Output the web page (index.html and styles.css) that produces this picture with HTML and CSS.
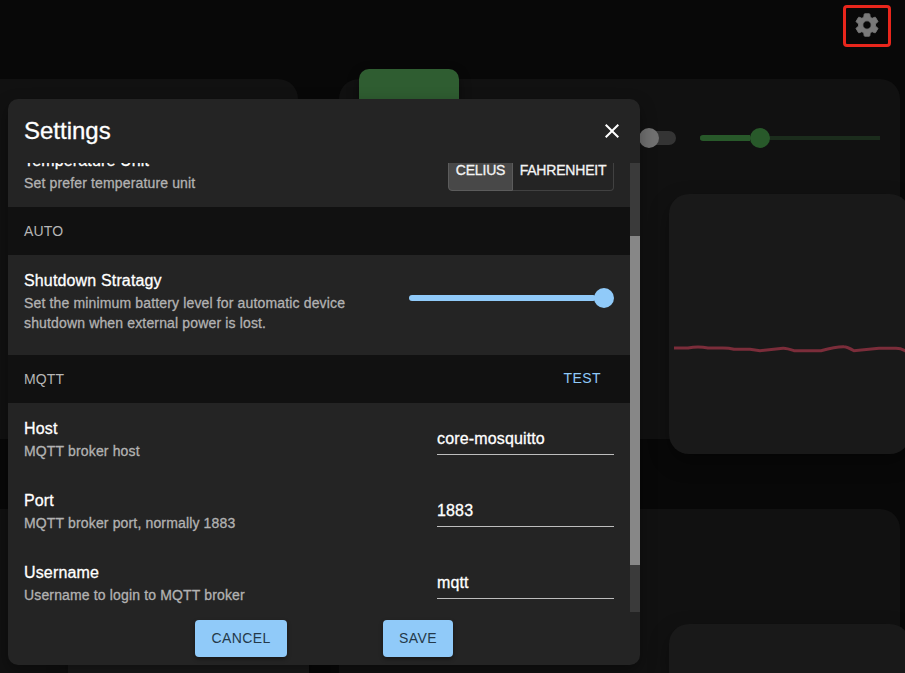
FILE: index.html
```html
<!DOCTYPE html>
<html lang="en">
<head>
<meta charset="utf-8">
<title>Settings</title>
<link rel="stylesheet" href="styles.css">
</head>
<body>
<header class="topbar">
  <button class="gear" aria-label="Settings">
    <svg viewBox="0 0 24 24"><path d="M19.14 12.94c.04-.3.06-.61.06-.94 0-.32-.02-.64-.07-.94l2.03-1.58c.18-.14.23-.41.12-.61l-1.92-3.32c-.12-.22-.37-.29-.59-.22l-2.39.96c-.5-.38-1.03-.7-1.62-.94l-.36-2.54c-.04-.24-.24-.41-.48-.41h-3.84c-.24 0-.43.17-.47.41l-.36 2.54c-.59.24-1.13.57-1.62.94l-2.39-.96c-.22-.08-.47 0-.59.22L2.74 8.87c-.12.21-.08.47.12.61l2.03 1.58c-.05.3-.09.63-.09.94s.02.64.07.94l-2.03 1.58c-.18.14-.23.41-.12.61l1.92 3.32c.12.22.37.29.59.22l2.39-.96c.5.38 1.03.7 1.62.94l.36 2.54c.05.24.24.41.48.41h3.84c.24 0 .44-.17.47-.41l.36-2.54c.59-.24 1.13-.56 1.62-.94l2.39.96c.22.08.47 0 .59-.22l1.92-3.32c.12-.22.07-.47-.12-.61l-2.01-1.58zM12 15.6c-1.98 0-3.6-1.62-3.6-3.6s1.62-3.6 3.6-3.6 3.6 1.62 3.6 3.6-1.62 3.6-3.6 3.6z"/></svg>
  </button>
</header>
<main class="board">
  <section class="card left"><div class="chart"></div></section>
  <section class="card right">
    <div class="controls">
      <div class="tile"></div>
      <div class="switch"><span class="switch-knob"></span></div>
      <div class="fan"><span class="fan-track"></span><span class="fan-knob"></span></div>
    </div>
    <div class="chart">
      <svg class="line" viewBox="0 0 236 20"><path d="M0 10H14Q24 8.2 34 10H49Q55 10 60 11.3H76L86 12.7L109 10.3Q112 10 120 12.7H147Q162 8.5 170 8.7Q173 8.7 180 12.7L205 10.2H222Q227 10.2 231 12.7H236"/></svg>
    </div>
  </section>
  <section class="card left cut"><div class="chart cut"></div></section>
  <section class="card right cut"><div class="chart low cut"></div></section>
</main>

<div class="dialog" role="dialog">
  <div class="dialog-head">
    <h1>Settings</h1>
    <svg class="close" viewBox="0 0 24 24"><path d="M19 6.41 17.59 5 12 10.59 6.41 5 5 6.41 10.59 12 5 17.59 6.41 19 12 13.41 17.59 19 19 17.59 13.41 12z"/></svg>
  </div>
  <div class="viewport">
    <div class="list">
      <div class="row">
        <div class="label"><p class="name">Temperature Unit</p><p class="desc">Set prefer temperature unit</p></div>
        <div class="toggle"><button class="selected">CELIUS</button><button>FAHRENHEIT</button></div>
      </div>
      <div class="section"><span>AUTO</span></div>
      <div class="row tall">
        <div class="label"><p class="name">Shutdown Stratagy</p><p class="desc">Set the minimum battery level for automatic device shutdown when external power is lost.</p></div>
        <div class="slider"><span class="slider-track"></span><span class="slider-knob"></span></div>
      </div>
      <div class="section"><span>MQTT</span><button class="test">TEST</button></div>
      <div class="row">
        <div class="label"><p class="name">Host</p><p class="desc">MQTT broker host</p></div>
        <input type="text" aria-label="Host" value="core-mosquitto">
      </div>
      <div class="row">
        <div class="label"><p class="name">Port</p><p class="desc">MQTT broker port, normally 1883</p></div>
        <input type="text" aria-label="Port" value="1883">
      </div>
      <div class="row">
        <div class="label"><p class="name">Username</p><p class="desc">Username to login to MQTT broker</p></div>
        <input type="text" aria-label="Username" value="mqtt">
      </div>
    </div>
    <div class="scrollbar"><div class="thumb"></div></div>
  </div>
  <div class="actions"><button>CANCEL</button><button>SAVE</button></div>
</div>
</body>
</html>
```
FILE: styles.css
```css
* { box-sizing: border-box; }
html, body { margin: 0; height: 100%; overflow: hidden; }
body {
  background: #080808;
  color: #fff;
  font-family: "Liberation Sans", Arial, sans-serif;
}
button, input { font-family: inherit; margin: 0; }

.topbar {
  height: 79px;
  padding: 5px 14px 0 0;
  display: flex;
  justify-content: flex-end;
  align-items: flex-start;
}
.gear {
  width: 48px;
  height: 42px;
  padding: 0;
  display: flex;
  align-items: center;
  justify-content: center;
  background: none;
  border: 3px solid #e8261c;
  border-radius: 4px;
}
.gear svg { width: 28px; height: 28px; flex: none; margin-top: -2px; fill: #797979; stroke: #797979; stroke-width: .8; }

.board {
  display: grid;
  grid-template-columns: 298px 561px;
  grid-template-rows: 360px 164px;
  gap: 70px 41px;
}
.card { background: #111; border-radius: 20px; }
.card.left { border-radius: 0 20px 20px 0; padding: 115px 0 0 68px; }
.chart {
  width: 241px;
  height: 260px;
  border-radius: 20px;
  background: #191919;
  box-shadow: 0 8px 20px rgba(0, 0, 0, .35);
}
.right .chart { margin-left: 330px; }
.chart.low { margin-top: 115px; }
.card.right { display: flow-root; }
.chart.cut { height: 49px; }
.card.cut, .chart.cut { border-bottom-left-radius: 0; border-bottom-right-radius: 0; }
.line { display: block; width: 236px; height: 20px; margin-left: 5px; transform: translateY(144px); }
.line path { fill: none; stroke: #7b2d3a; stroke-width: 3; }

.controls { height: 115px; padding-left: 20px; display: flex; align-items: flex-start; }
.tile { width: 100px; height: 100px; margin-top: -10px; border-radius: 10px; background: #2f5d31; box-shadow: 0 4px 12px rgba(0, 0, 0, .4); }
.switch { width: 34px; height: 14px; margin: 52px 24px 0 183px; border-radius: 7px; background: #343434; }
.switch-knob { display: block; width: 20px; height: 20px; margin: -3px 0 0 -3px; border-radius: 50%; background: #717171; }
.fan { display: flex; align-items: center; width: 180px; height: 20px; margin-top: 49px; background: linear-gradient(#1b2c1c, #1b2c1c) center / 100% 4px no-repeat; }
.fan-track { width: 50px; height: 6px; border-radius: 3px 0 0 3px; background: #28592a; }
.fan-knob { width: 20px; height: 20px; border-radius: 50%; background: #28592a; }

.dialog {
  position: absolute;
  left: 8px;
  top: 99px;
  width: 632px;
  height: 566px;
  display: flex;
  flex-direction: column;
  background: #242424;
  border-radius: 10px;
  box-shadow: 0 6px 16px rgba(0, 0, 0, .35);
}
.dialog-head { height: 64px; padding: 0 16px; display: flex; align-items: center; justify-content: space-between; }
.dialog-head h1 { margin: 0; font-size: 24px; font-weight: 400; line-height: 32px; -webkit-text-stroke: .3px; }
.close { width: 24px; height: 24px; fill: #fff; }
.viewport { height: 449px; display: flex; overflow: hidden; }
.list { flex: 1; margin-top: -28px; }
.scrollbar { width: 10px; background: #3a3a3a; padding-top: 73px; }
.thumb { height: 329px; background: #878787; }

.row { height: 72px; padding: 14px 16px; display: flex; align-items: flex-start; justify-content: space-between; }
.row.tall { height: 100px; }
.label { width: 345px; }
.label p { margin: 0; -webkit-text-stroke: .3px; }
.name { font-size: 16px; line-height: 24px; letter-spacing: .15px; color: #fff; }
.desc { font-size: 14px; line-height: 20px; letter-spacing: .15px; color: #b2b2b2; }
.section {
  height: 48px;
  padding: 0 16px;
  display: flex;
  align-items: center;
  justify-content: space-between;
  background: #111;
  font-size: 14px;
  letter-spacing: .14px;
  color: #b6b6b6;
}
.test { padding: 0 13px 2px; background: none; border: 0; font-size: 14px; letter-spacing: .4px; color: #90caf9; }

.toggle { display: flex; margin-top: 1px; }
.toggle button {
  width: 101px;
  height: 41px;
  padding: 0 0 1px;
  background: none;
  border: 1px solid #414141;
  border-left: 0;
  border-radius: 0 4px 4px 0;
  font-size: 14px;
  font-weight: 400;
  color: #f4f4f4;
  letter-spacing: -.2px;
  -webkit-text-stroke: .3px;
}
.toggle .selected { width: 65px; background: #484848; border: 1px solid #5c5c5c; border-radius: 4px 0 0 4px; }

.slider { display: flex; align-items: center; width: 205px; height: 20px; margin-top: 19px; }
.slider-track { flex: 1; height: 6px; margin-right: -2px; border-radius: 3px; background: #90caf9; }
.slider-knob { width: 20px; height: 20px; border-radius: 50%; background: #90caf9; }

input {
  width: 177px;
  height: 32px;
  margin-top: 6px;
  padding: 5px 0 4px;
  background: none;
  border: 0;
  border-bottom: 1px solid #bdbdbd;
  border-radius: 0;
  outline: 0;
  color: #fff;
  font-size: 16px;
  letter-spacing: .15px;
  -webkit-text-stroke: .3px;
}
.actions { display: flex; justify-content: center; gap: 96px; padding-top: 8px; }
.actions button {
  width: 92px;
  height: 37px;
  padding: 0 0 2px;
  border: 0;
  border-radius: 4px;
  background: #90caf9;
  color: #24394a;
  font-size: 14px;
  letter-spacing: .4px;
  box-shadow: 0 2px 4px rgba(0, 0, 0, .4);
}
.actions button:last-child { width: 70px; }
```
